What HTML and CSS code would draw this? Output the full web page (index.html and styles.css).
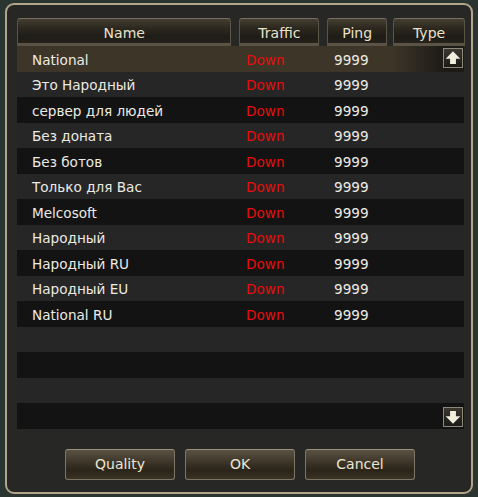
FILE: index.html
```html
<!DOCTYPE html>
<html lang="en">
<head>
    <meta charset="UTF-8">
    <title>Server List</title>
    <link rel="stylesheet" href="styles.css">
</head>
<body>
    <div class="frame">
        <div class="table-head">
            <div class="head-cell name-col">Name</div>
            <div class="head-cell traffic-col">Traffic</div>
            <div class="head-cell ping-col">Ping</div>
            <div class="head-cell type-col">Type</div>
        </div>

        <div class="list">
            <div class="row selected"><span>National</span><span class="down">Down</span><span>9999</span></div>
            <div class="row"><span>Это Народный</span><span class="down">Down</span><span>9999</span></div>
            <div class="row"><span>сервер для людей</span><span class="down">Down</span><span>9999</span></div>
            <div class="row"><span>Без доната</span><span class="down">Down</span><span>9999</span></div>
            <div class="row"><span>Без ботов</span><span class="down">Down</span><span>9999</span></div>
            <div class="row"><span>Только для Вас</span><span class="down">Down</span><span>9999</span></div>
            <div class="row"><span>Melcosoft</span><span class="down">Down</span><span>9999</span></div>
            <div class="row"><span>Народный</span><span class="down">Down</span><span>9999</span></div>
            <div class="row"><span>Народный RU</span><span class="down">Down</span><span>9999</span></div>
            <div class="row"><span>Народный EU</span><span class="down">Down</span><span>9999</span></div>
            <div class="row"><span>National RU</span><span class="down">Down</span><span>9999</span></div>
            <div class="row"></div>
            <div class="row"></div>
            <div class="row"></div>
            <div class="row"></div>

            <div class="scroll-btn scroll-up">
                <svg viewBox="0 0 12 12"><path d="M6 1 L11.5 6.5 H8.2 V10.5 H3.8 V6.5 H0.5 Z" fill="#f2eddc"/></svg>
            </div>
            <div class="scroll-btn scroll-down">
                <svg viewBox="0 0 12 12"><path d="M6 11 L11.5 5.5 H8.2 V1.5 H3.8 V5.5 H0.5 Z" fill="#f2eddc"/></svg>
            </div>
        </div>

        <div class="actions">
            <button class="btn">Quality</button>
            <button class="btn">OK</button>
            <button class="btn">Cancel</button>
        </div>
    </div>
</body>
</html>
```

FILE: styles.css
```css
* {
    margin: 0;
    padding: 0;
    box-sizing: border-box;
}

body {
    background: #2a3430;
    font-family: "DejaVu Sans", Tahoma, sans-serif;
    font-size: 13px;
    color: #ecebe4;
    width: 478px;
    height: 497px;
    padding: 3px 5px 3px 5px;
}

.frame {
    height: 491px;
    border: 2px solid #b3a58a;
    border-radius: 9px;
    background: #272826;
    padding: 13px 6px 0 10px;
}

.table-head {
    display: flex;
    height: 28px;
}

.head-cell {
    display: flex;
    align-items: center;
    justify-content: center;
    color: #e8e2cc;
    font-size: 14px;
    padding-top: 1px;
    background: linear-gradient(180deg, #453f32 0%, #2c281f 35%, #1e1c17 70%, #29251d 100%);
    border: 1px solid #5a5446;
    border-top-color: #777060;
    border-radius: 3px 3px 0 0;
    box-shadow: inset 0 -2px 0 #5b5446;
}

.name-col {
    width: 215px;
}

.traffic-col {
    width: 80px;
    margin-left: 8px;
}

.ping-col {
    width: 60px;
    margin-left: 8px;
}

.type-col {
    width: 72px;
    margin-left: 6px;
}

.list {
    position: relative;
    width: 447px;
}

.row {
    display: grid;
    grid-template-columns: 229px 88px 1fr;
    align-items: center;
    height: 25.5px;
    padding-top: 2px;
    background: #262626;
    font-size: 13.6px;
}

.row:nth-child(odd) {
    background: #131313;
}

.row.selected {
    background: linear-gradient(90deg, #3d3528 0%, #3d3528 84%, #1c1a16 96%);
}

.row span:first-child {
    padding-left: 15px;
}

.down {
    color: #e80c0c;
}

.scroll-btn {
    position: absolute;
    right: 1px;
    width: 20px;
    height: 20px;
    border: 1px solid #8c887c;
    background: linear-gradient(180deg, #3a372f 0%, #1c1a16 100%);
    display: flex;
    align-items: center;
    justify-content: center;
}

.scroll-btn svg {
    width: 16px;
    height: 16px;
}

.scroll-up {
    top: 2px;
}

.scroll-down {
    bottom: 2px;
}

.actions {
    display: flex;
    justify-content: center;
    gap: 10px;
    margin-top: 20px;
    padding-right: 2px;
}

.btn {
    width: 110px;
    height: 31px;
    font-family: "DejaVu Sans", Tahoma, sans-serif;
    font-size: 14px;
    color: #ece6d2;
    background: linear-gradient(180deg, #5a5242 0%, #3e372a 40%, #2a241a 70%, #3a3224 100%);
    border: 1px solid #7d7564;
    border-top-color: #9a917c;
    border-radius: 3px;
}
```
